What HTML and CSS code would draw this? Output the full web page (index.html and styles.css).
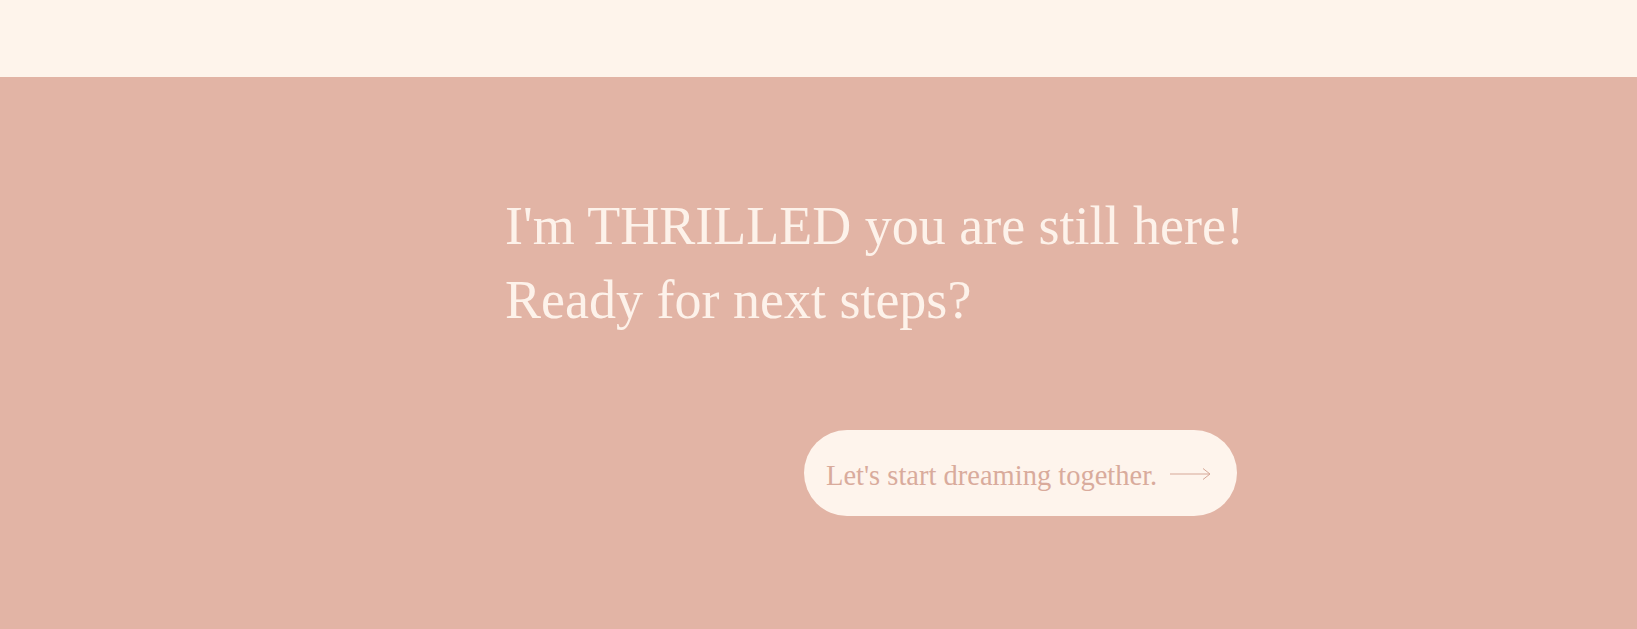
FILE: index.html
```html
<!DOCTYPE html>
<html lang="en">
<head>
<meta charset="utf-8">
<title>Next steps</title>
<link rel="stylesheet" href="styles.css">
</head>
<body>
<header class="topbar"></header>
<section class="cta">
  <div class="cta-inner">
    <h2 class="cta-title">I'm THRILLED you are still here!<br>Ready for next steps?</h2>
    <div class="cta-actions">
      <a class="cta-button" href="#">
        <span class="cta-label">Let's start dreaming together.</span>
        <svg class="cta-arrow" width="42" height="14" viewBox="0 0 42 14" aria-hidden="true">
          <path d="M0 7H40M33 1.5L40 7L33 12.5" fill="none" stroke="#d6a898" stroke-width="1"/>
        </svg>
      </a>
    </div>
  </div>
</section>
</body>
</html>
```
FILE: styles.css
```css
html, body {
  margin: 0;
  padding: 0;
}
body {
  background: #e2b4a5;
  font-family: "Liberation Serif", "DejaVu Serif", serif;
  height: 629px;
  overflow: hidden;
}
.topbar {
  height: 77px;
  background: #fef4eb;
}
.cta {
  background: #e2b4a5;
  padding-top: 112px;
}
.cta-inner {
  margin-left: 505px;
  width: 732px;
}
.cta-title {
  margin: 0;
  font-weight: 400;
  font-size: 54px;
  line-height: 74px;
  color: #fdf2ea;
  white-space: nowrap;
}
.cta-actions {
  display: flex;
  justify-content: flex-end;
  margin-top: 93px;
}
.cta-button {
  display: flex;
  align-items: center;
  gap: 13px;
  height: 86px;
  width: 433px;
  box-sizing: border-box;
  padding-left: 22px;
  border-radius: 43px;
  background: #fef4ec;
  text-decoration: none;
  color: #d9ab9c;
}
.cta-label {
  font-size: 28.5px;
  white-space: nowrap;
  padding-top: 5px;
}
.cta-arrow {
  display: block;
  margin-top: 2px;
}
```
